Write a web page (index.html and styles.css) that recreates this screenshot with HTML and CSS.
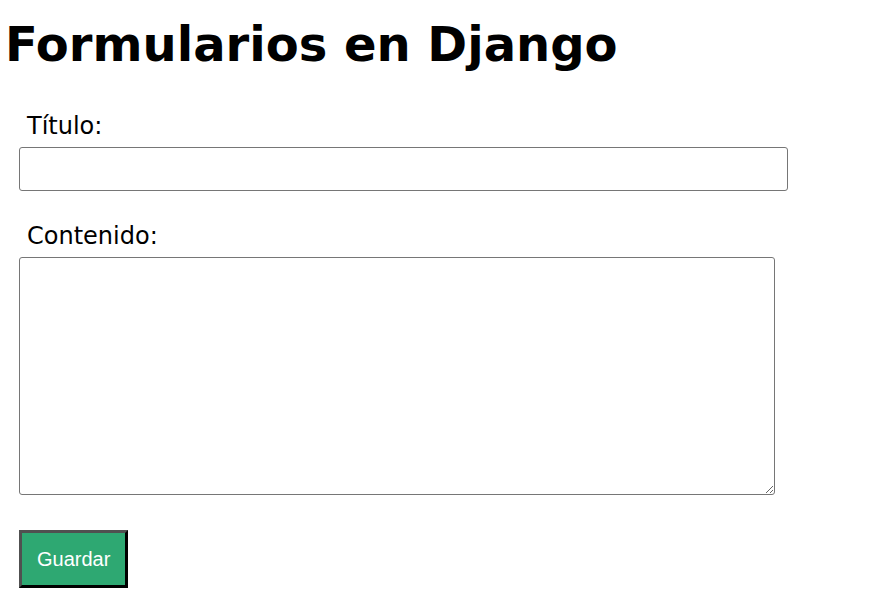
FILE: index.html
```html
<!DOCTYPE html>
<html lang="es">
<head>
<meta charset="utf-8">
<title>Formularios en Django</title>
<link rel="stylesheet" href="styles.css">
</head>
<body>
<h1 class="title">Formularios en Django</h1>
<form class="form">
  <div class="field">
    <label class="label" for="titulo">Título:</label>
    <input class="input" id="titulo" type="text">
  </div>
  <div class="field">
    <label class="label" for="contenido">Contenido:</label>
    <textarea class="textarea" id="contenido"></textarea>
  </div>
  <button class="button" type="submit">Guardar</button>
</form>
</body>
</html>
```
FILE: styles.css
```css
html, body {
  margin: 0;
  padding: 0;
  background: #fff;
}

body {
  font-family: "DejaVu Sans", Verdana, sans-serif;
  color: #000;
}

.title {
  margin: 0;
  padding: 16px 0 0 5px;
  font-size: 48px;
  line-height: 56px;
  font-weight: bold;
}

.form {
  display: flex;
  flex-direction: column;
  align-items: flex-start;
  padding: 40px 0 0 19px;
}

.field {
  display: flex;
  flex-direction: column;
  align-items: flex-start;
  margin-bottom: 31px;
}

.field:last-of-type {
  margin-bottom: 35px;
}

.label {
  margin: 0 0 7px 8px;
  font-size: 24px;
  line-height: 28px;
}

.input,
.textarea {
  box-sizing: border-box;
  margin: 0;
  border: 1px solid #767676;
  border-radius: 3px;
  background: #fff;
  font-family: "Liberation Mono", monospace;
  font-size: 13px;
}

.input {
  width: 769px;
  height: 44px;
  padding: 1px 2px;
}

.textarea {
  width: 756px;
  height: 238px;
  padding: 2px;
  resize: both;
}

.button {
  margin: 0;
  padding: 15px 15px 14px;
  border-style: solid;
  border-width: 3px;
  border-color: #505050 #000 #000 #505050;
  border-radius: 0;
  background: #2ea872;
  color: #fff;
  font-family: "Liberation Sans", Arial, sans-serif;
  font-size: 20px;
  line-height: 23px;
}
```
